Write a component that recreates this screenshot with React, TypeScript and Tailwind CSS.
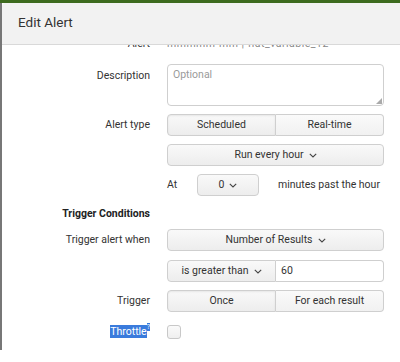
import React from 'react'

function Chevron() {
    return (
        <svg width="8" height="5" viewBox="0 0 8 5" className="ml-[5px] inline-block">
            <path d="M0.8 0.8 L4 4 L7.2 0.8" fill="none" stroke="#444" strokeWidth="1.1" />
        </svg>
    )
}

function Row({ label, bold, children, className = '' }: { label?: React.ReactNode; bold?: boolean; children?: React.ReactNode; className?: string }) {
    return (
        <div className={`flex items-center ${className}`}>
            <div className={`w-[148px] shrink-0 text-right whitespace-nowrap ${bold ? 'font-bold text-[#222]' : 'text-[#333]'}`}>{label}</div>
            <div className="ml-[17px] w-[217px] shrink-0">{children}</div>
        </div>
    )
}

const btn = 'h-[22px] flex items-center justify-center whitespace-nowrap border border-[#cfcfcf] bg-gradient-to-b from-[#f9f9f9] to-[#ededed] text-[#333]'

export default function App() {
    return (
        <div className="w-[400px] h-[362px] overflow-hidden bg-white text-[10.5px] font-['Roboto','Liberation_Sans',sans-serif]">
            <div className="h-[3px] bg-[#3d6b1f]" />
            <div className="flex">
                <div className="w-[2px] h-[347px] bg-[#777]" />
                <div className="flex-1 flex flex-col">
                    <div className="h-[42px] bg-[#f2f2f2] border-b border-[#d9d9d9] rounded-tl-[4px] flex items-center pl-4 shrink-0">
                        <span className="text-[13.5px] text-[#333] mt-[-2px]">Edit Alert</span>
                    </div>
                    <div className="h-[317px] overflow-hidden">
                        <Row label="Alert" className="mt-[-9px] h-[16px]">
                            <span className="text-[#888] tracking-[0.5px]">mmmmm-mm | flat_variable_12</span>
                        </Row>
                        <div className="flex mt-[12px]">
                            <div className="w-[148px] shrink-0 text-right text-[#333] pt-[4px]">Description</div>
                            <div className="ml-[17px] w-[217px] h-[42px] border border-[#cfcfcf] rounded-[4px] relative px-[5px] pt-[2px] text-[#9a9a9a]">
                                Optional
                                <svg width="6" height="6" className="absolute right-[1px] bottom-[1px]" viewBox="0 0 6 6">
                                    <path d="M6 0 L6 6 L0 6 Z" fill="#aaa" />
                                </svg>
                            </div>
                        </div>
                        <Row label="Alert type" className="mt-[8px]">
                            <div className="flex">
                                <div className={`${btn} w-[109px] rounded-l-[4px] from-[#ececec] to-[#e6e6e6] shadow-[inset_0_1px_2px_rgba(0,0,0,0.08)]`}>Scheduled</div>
                                <div className={`${btn} flex-1 rounded-r-[4px] border-l-0 from-[#fafafa] to-[#f1f1f1]`}>Real-time</div>
                            </div>
                        </Row>
                        <Row className="mt-[8px]">
                            <div className={`${btn} rounded-[4px]`}>Run every hour<Chevron /></div>
                        </Row>
                        <Row className="mt-[8px]">
                            <div className="flex items-center">
                                <span className="w-[30px] text-[#333]">At</span>
                                <div className={`${btn} w-[62px] rounded-[4px]`}>0<Chevron /></div>
                                <span className="ml-[19px] text-[#333] whitespace-nowrap">minutes past the hour</span>
                            </div>
                        </Row>
                        <Row label="Trigger Conditions" bold className="mt-[10px] h-[16px]" />
                        <Row label="Trigger alert when" className="mt-[7px]">
                            <div className={`${btn} rounded-[4px]`}>Number of Results<Chevron /></div>
                        </Row>
                        <Row className="mt-[9px]">
                            <div className="flex">
                                <div className={`${btn} w-[109px] rounded-l-[4px]`}>is greater than<Chevron /></div>
                                <div className="h-[22px] flex-1 border border-l-0 border-[#cfcfcf] rounded-r-[4px] flex items-center pl-[5px] text-[#333]">60</div>
                            </div>
                        </Row>
                        <Row label="Trigger" className="mt-[8px]">
                            <div className="flex">
                                <div className={`${btn} w-[109px] rounded-l-[4px] from-[#ececec] to-[#e6e6e6] shadow-[inset_0_1px_2px_rgba(0,0,0,0.08)]`}>Once</div>
                                <div className={`${btn} flex-1 rounded-r-[4px] border-l-0 from-[#fafafa] to-[#f1f1f1]`}>For each result</div>
                            </div>
                        </Row>
                        <Row
                            className="mt-[12px]"
                            label={
                                <span className="inline-flex items-start">
                                    <span className="bg-[#3a7bdc] text-white leading-[13px]">Throttle</span>
                                    <span className="bg-[#3a7bdc] text-white text-[7px] leading-[8px] mt-[-2px]">?</span>
                                </span>
                            }
                        >
                            <div className="w-[14px] h-[14px] border border-[#c8c8c8] rounded-[3px] bg-gradient-to-b from-[#fafafa] to-[#efefef]" />
                        </Row>
                    </div>
                </div>
            </div>
        </div>
    )
}
